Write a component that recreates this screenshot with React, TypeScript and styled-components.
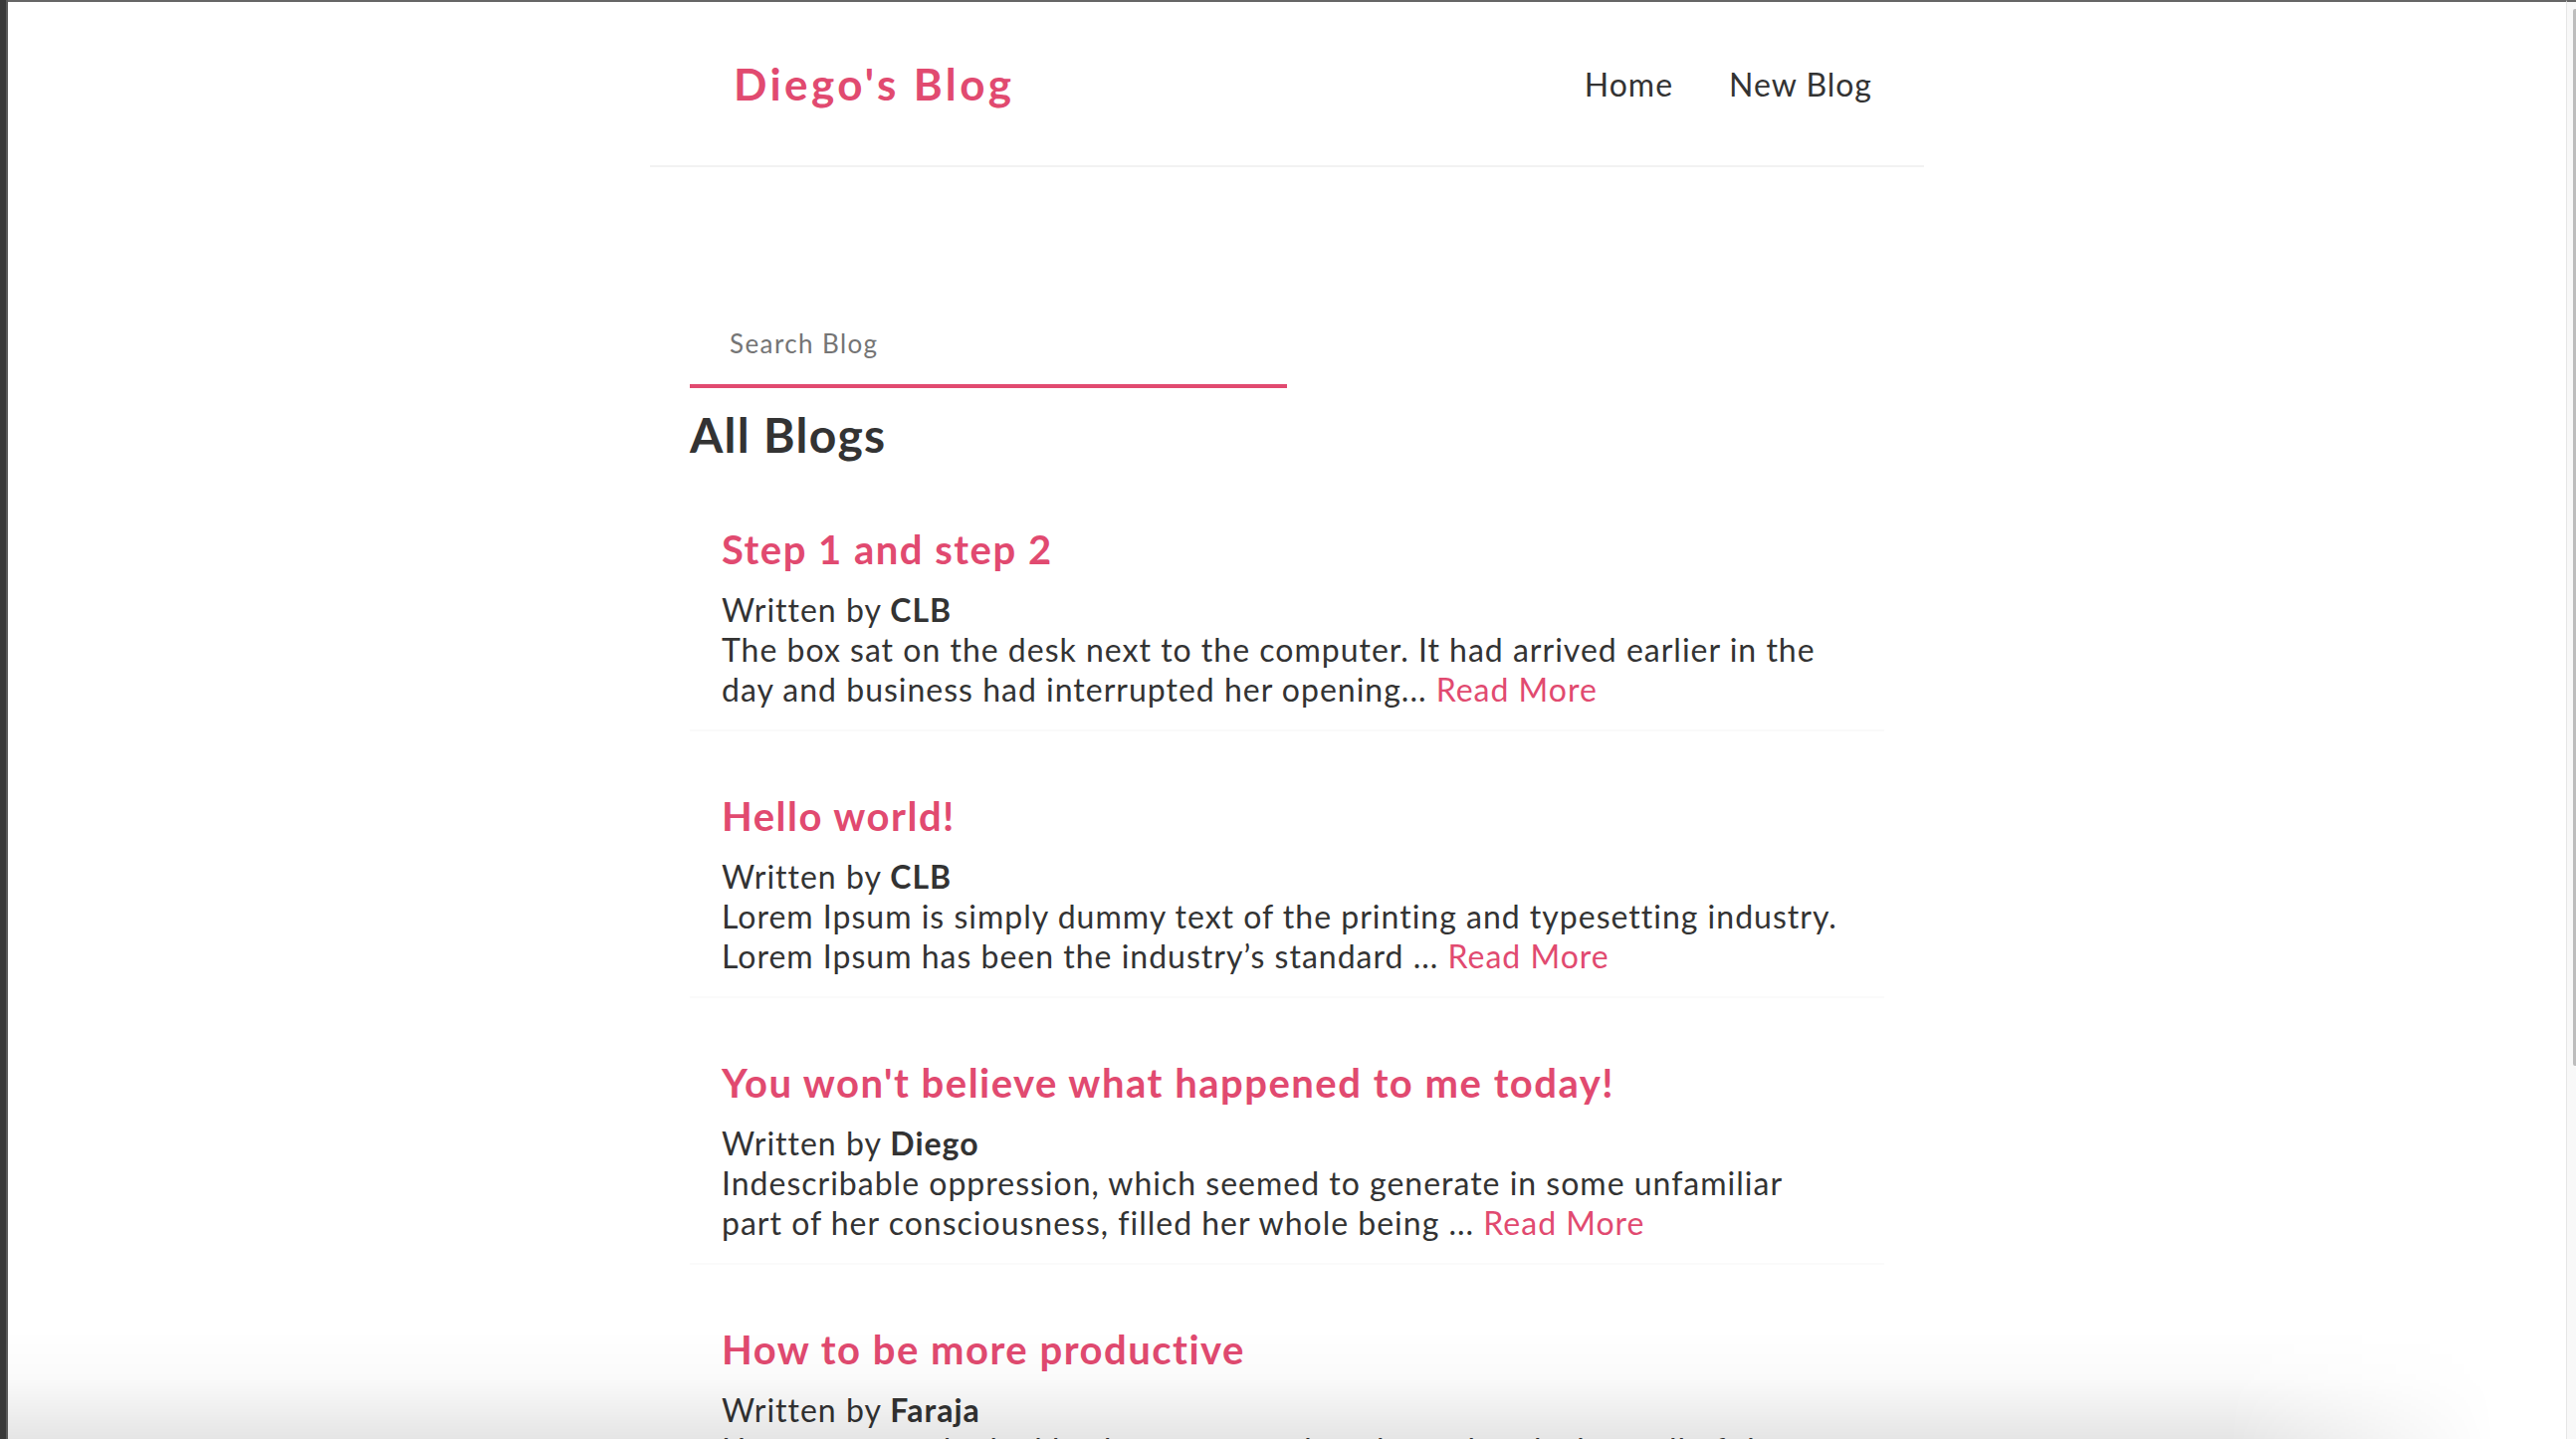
import styled, { createGlobalStyle } from 'styled-components';

const PINK = '#e14a70';
const TEXT = '#333';

interface BlogType {
    id: number;
    title: string;
    author: string;
    body: string;
}

const blogs: BlogType[] = [
    {
        id: 1,
        title: 'Step 1 and step 2',
        author: 'CLB',
        body: 'The box sat on the desk next to the computer. It had arrived earlier in the day and business had interrupted her opening...',
    },
    {
        id: 2,
        title: 'Hello world!',
        author: 'CLB',
        body: 'Lorem Ipsum is simply dummy text of the printing and typesetting industry. Lorem Ipsum has been the industry’s standard ...',
    },
    {
        id: 3,
        title: "You won't believe what happened to me today!",
        author: 'Diego',
        body: 'Indescribable oppression, which seemed to generate in some unfamiliar part of her consciousness, filled her whole being ...',
    },
    {
        id: 4,
        title: 'How to be more productive',
        author: 'Faraja',
        body: 'Have you ever looked back at your week and wondered where all of the time went? Small habits add up ...',
    },
];

const GlobalStyle = createGlobalStyle`
    html, body {
        margin: 0;
        padding: 0;
        overflow: hidden;
        background: #fff;
    }

    * {
        margin: 0;
        box-sizing: border-box;
        font-family: 'Lato', 'Noto Sans', sans-serif;
        color: ${TEXT};
    }
`;

const Navbar = () => (
    <StyledNav>
        <StyledLogo>Diego's Blog</StyledLogo>
        <StyledLinks>
            <StyledNavLink href="#">Home</StyledNavLink>
            <StyledNavLink href="#">New Blog</StyledNavLink>
        </StyledLinks>
    </StyledNav>
);

const BlogPreview = ({ blog }: { blog: BlogType }) => (
    <StyledPreview>
        <StyledPreviewTitle>{blog.title}</StyledPreviewTitle>
        <StyledP>
            Written by <b>{blog.author}</b>
        </StyledP>
        <StyledP>
            {blog.body} <StyledReadMore href="#">Read More</StyledReadMore>
        </StyledP>
    </StyledPreview>
);

const App = () => {
    return (
        <>
            <GlobalStyle />
            <StyledScreen>
                <StyledWindowEdge />
                <StyledViewport>
                    <Navbar />
                    <StyledContent>
                        <StyledSearch placeholder="Search Blog" />
                        <StyledH2>All Blogs</StyledH2>
                        <StyledBlogList>
                            {blogs.map((blog) => (
                                <BlogPreview key={blog.id} blog={blog} />
                            ))}
                        </StyledBlogList>
                    </StyledContent>
                </StyledViewport>
                <StyledScrollTrack>
                    <StyledScrollThumb />
                </StyledScrollTrack>
            </StyledScreen>
            <StyledBottomShadow />
        </>
    );
};

const StyledScreen = styled.div`
    display: grid;
    grid-template-columns: 8px 1fr 10px;
    height: 1446px;
    overflow: hidden;
`;

const StyledWindowEdge = styled.div`
    background: #393939;
    border-right: 2px solid #5a5a5a;
`;

const StyledViewport = styled.div`
    border-top: 2px solid #666;
    overflow: hidden;
    min-width: 0;
`;

const StyledScrollTrack = styled.div`
    border-top: 2px solid #666;
    border-left: 1px solid #e6e6e6;
    background: #f8f8f8;
    display: flex;
    justify-content: flex-end;
    padding-top: 7px;
`;

const StyledScrollThumb = styled.div`
    width: 3px;
    height: 1062px;
    background: #bdbdbd;
    border-radius: 2px 0 0 2px;
`;

const StyledNav = styled.nav`
    display: flex;
    align-items: flex-start;
    max-width: 1280px;
    height: 166px;
    margin: 0 auto;
    padding: 0 40px;
    border-bottom: 2px solid #f2f2f2;
`;

const StyledLogo = styled.h1`
    margin-top: 58px;
    padding-left: 44px;
    font-size: 44px;
    line-height: 48px;
    font-weight: 700;
    letter-spacing: 3.4px;
    color: ${PINK};
`;

const StyledLinks = styled.div`
    margin-top: 63px;
    margin-left: auto;
    display: flex;
`;

const StyledNavLink = styled.a`
    margin-left: 32px;
    padding: 0 12px;
    font-size: 32px;
    line-height: 40px;
    letter-spacing: 1px;
    text-decoration: none;

    &:hover {
        color: ${PINK};
    }
`;

const StyledContent = styled.main`
    max-width: 1280px;
    margin: 80px auto;
    padding: 40px;
`;

const StyledSearch = styled.input`
    display: block;
    width: 600px;
    height: 102px;
    padding: 36px 40px 20px;
    border: none;
    border-bottom: 4px solid ${PINK};
    outline: none;
    font-size: 26px;
    letter-spacing: 1.4px;
    background: transparent;

    &::placeholder {
        color: #757575;
    }
`;

const StyledH2 = styled.h2`
    margin-top: 17px;
    font-size: 48px;
    line-height: 60px;
    font-weight: 700;
    letter-spacing: 1.3px;
`;

const StyledBlogList = styled.div`
    display: flex;
    flex-direction: column;
    gap: 40px;
    margin-top: 40px;
`;

const StyledPreview = styled.div`
    padding: 20px 38px 20px 32px;
    border-bottom: 2px solid #fafafa;
`;

const StyledPreviewTitle = styled.h2`
    font-size: 40px;
    line-height: 50px;
    font-weight: 700;
    letter-spacing: 1.5px;
    color: ${PINK};
    margin-bottom: 16px;
`;

const StyledP = styled.p`
    font-size: 32px;
    line-height: 40px;
    letter-spacing: 1px;

    b {
        font-weight: 700;
    }
`;

const StyledReadMore = styled.a`
    color: ${PINK};
    text-decoration: none;
`;

const StyledBottomShadow = styled.div`
    position: fixed;
    left: 8px;
    right: 10px;
    bottom: 0;
    height: 110px;
    pointer-events: none;
    background: linear-gradient(
        to bottom,
        rgba(0, 0, 0, 0) 0%,
        rgba(0, 0, 0, 0.02) 45%,
        rgba(0, 0, 0, 0.1) 100%
    );
    mask-image: linear-gradient(to right, #000 0, #000 2230px, transparent 2500px);
`;

export default App;
